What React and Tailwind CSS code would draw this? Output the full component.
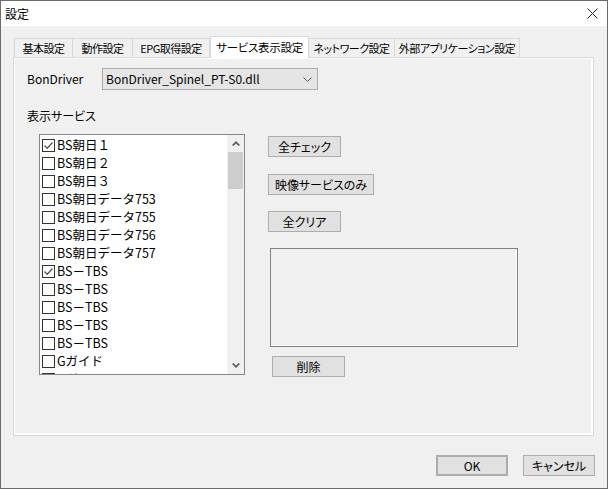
import React from "react";

const tabs = [
  { label: "基本設定", w: "w-[59px]" },
  { label: "動作設定", w: "w-[61px]" },
  { label: "EPG取得設定", w: "w-[78px]" },
  { label: "サービス表示設定", w: "w-[99px]", active: true },
  { label: "ネットワーク設定", w: "w-[87px]" },
  { label: "外部アプリケーション設定", w: "w-[126px]" },
];

const services = [
  { name: "BS朝日１", checked: true },
  { name: "BS朝日２" },
  { name: "BS朝日３" },
  { name: "BS朝日データ753" },
  { name: "BS朝日データ755" },
  { name: "BS朝日データ756" },
  { name: "BS朝日データ757" },
  { name: "BS－TBS", checked: true },
  { name: "BS－TBS" },
  { name: "BS－TBS" },
  { name: "BS－TBS" },
  { name: "BS－TBS" },
  { name: "Gガイド" },
  { name: "Gガイド" },
];

// plain win32 style push button
function Button({ children, className = "" }) {
  return (
    <button
      type="button"
      className={`h-[21px] bg-[#e1e1e1] border border-[#adadad] text-[12px] leading-none text-black whitespace-nowrap flex items-center justify-center ${className}`}
    >
      {children}
    </button>
  );
}

function CheckBox({ checked }) {
  return (
    <span className="w-[13px] h-[13px] border border-[#333] bg-white flex items-center justify-center shrink-0">
      {checked && (
        <svg width="11" height="11" viewBox="0 0 11 11">
          <polyline points="1.5,5.5 4.2,8.2 9.5,2.5" fill="none" stroke="#555" strokeWidth="1.3" />
        </svg>
      )}
    </span>
  );
}

export default function App() {
  return (
    <div className="w-[608px] h-[489px] bg-[#f0f0f0] border border-[#6b6b6b] font-['Noto_Sans_CJK_JP',sans-serif] [font-feature-settings:'palt'] text-black overflow-hidden">
      {/* title bar */}
      <div className="h-[25px] bg-white flex items-center justify-between">
        <span className="pl-[4px] text-[12px] leading-none">設定</span>
        <svg width="11" height="11" viewBox="0 0 11 11" className="mr-[9px]">
          <path d="M0.5 0.5 L10.5 10.5 M10.5 0.5 L0.5 10.5" stroke="#222" strokeWidth="1" />
        </svg>
      </div>

      {/* tabs */}
      <div className="pt-[10px] pl-[12px]">
        <div className="flex items-end h-[21px] pl-[1px]">
          {tabs.map((t) =>
            t.active ? (
              <div
                key={t.label}
                className={`${t.w} h-[22px] -mb-px bg-white border border-b-0 border-[#d9d9d9] relative z-10 flex items-center justify-center text-[11.5px] tracking-[-0.3px] leading-none whitespace-nowrap`}
              >
                {t.label}
              </div>
            ) : (
              <div
                key={t.label}
                className={`${t.w} h-[19px] bg-[#f0f0f0] border border-b-0 border-[#d9d9d9] -ml-px first:ml-0 flex items-center justify-center text-[11px] tracking-[-0.5px] leading-none whitespace-nowrap`}
              >
                {t.label}
              </div>
            )
          )}
        </div>

        {/* tab panel */}
        <div className="w-[581px] h-[379px] border border-[#d9d9d9] shadow-[inset_1px_1px_0_#fff,inset_-2px_-2px_0_#fff] bg-[#f0f0f0] pl-[13px] pt-[10px]">
          <div className="flex items-center h-[22px]">
            <span className="w-[75px] text-[12px] leading-none">BonDriver</span>
            <div className="w-[216px] h-[22px] bg-[#e5e5e5] border border-[#acacac] flex items-center justify-between pl-[3px] pr-[5px]">
              <span className="text-[12px] leading-none">BonDriver_Spinel_PT-S0.dll</span>
              <svg width="9" height="5" viewBox="0 0 9 5">
                <polyline points="0.5,0.5 4.5,4.5 8.5,0.5" fill="none" stroke="#606060" strokeWidth="1" />
              </svg>
            </div>
          </div>

          <div className="mt-[18px] text-[12px] leading-[16px]">表示サービス</div>

          <div className="mt-[10px] flex items-start">
            {/* service list */}
            <div className="ml-[12px] w-[206px] h-[241px] border border-[#828790] bg-white flex overflow-hidden">
              <div className="flex-1 pt-[1px] pl-[2px] overflow-hidden">
                {services.map((s, i) => (
                  <div key={i} className="h-[18px] flex items-center gap-[2px]">
                    <CheckBox checked={s.checked} />
                    <span className="text-[12.5px] leading-none whitespace-nowrap [font-feature-settings:normal]">{s.name}</span>
                  </div>
                ))}
              </div>
              <div className="w-[17px] bg-[#f0f0f0] flex flex-col items-center">
                <div className="h-[17px] flex items-center justify-center">
                  <svg width="8" height="5" viewBox="0 0 8 5">
                    <polygon points="0,4 4,0 8,4 6.5,5 4,2.5 1.5,5" fill="#606060" />
                  </svg>
                </div>
                <div className="w-[15px] h-[37px] bg-[#cdcdcd]" />
                <div className="flex-1" />
                <div className="h-[17px] flex items-center justify-center">
                  <svg width="8" height="5" viewBox="0 0 8 5">
                    <polygon points="0,1 4,5 8,1 6.5,0 4,2.5 1.5,0" fill="#606060" />
                  </svg>
                </div>
              </div>
            </div>

            {/* right column */}
            <div className="ml-[23px] mt-[2px] flex flex-col items-start">
              <Button className="w-[73px]">全チェック</Button>
              <Button className="w-[106px] mt-[17px]">映像サービスのみ</Button>
              <Button className="w-[73px] mt-[16px]">全クリア</Button>
              <div className="ml-[2px] mt-[16px] w-[248px] h-[99px] border border-[#828282] shadow-[inset_-1px_-1px_0_#fff] bg-[#f0f0f0]" />
              <Button className="ml-[4px] mt-[9px] w-[73px]">削除</Button>
            </div>
          </div>
        </div>
      </div>

      {/* dialog buttons */}
      <div className="mt-[19px] flex justify-end gap-[15px] pr-[12px]">
        <Button className="w-[72px] border-2 border-[#0078d7]">OK</Button>
        <Button className="w-[72px]">キャンセル</Button>
      </div>
    </div>
  );
}
